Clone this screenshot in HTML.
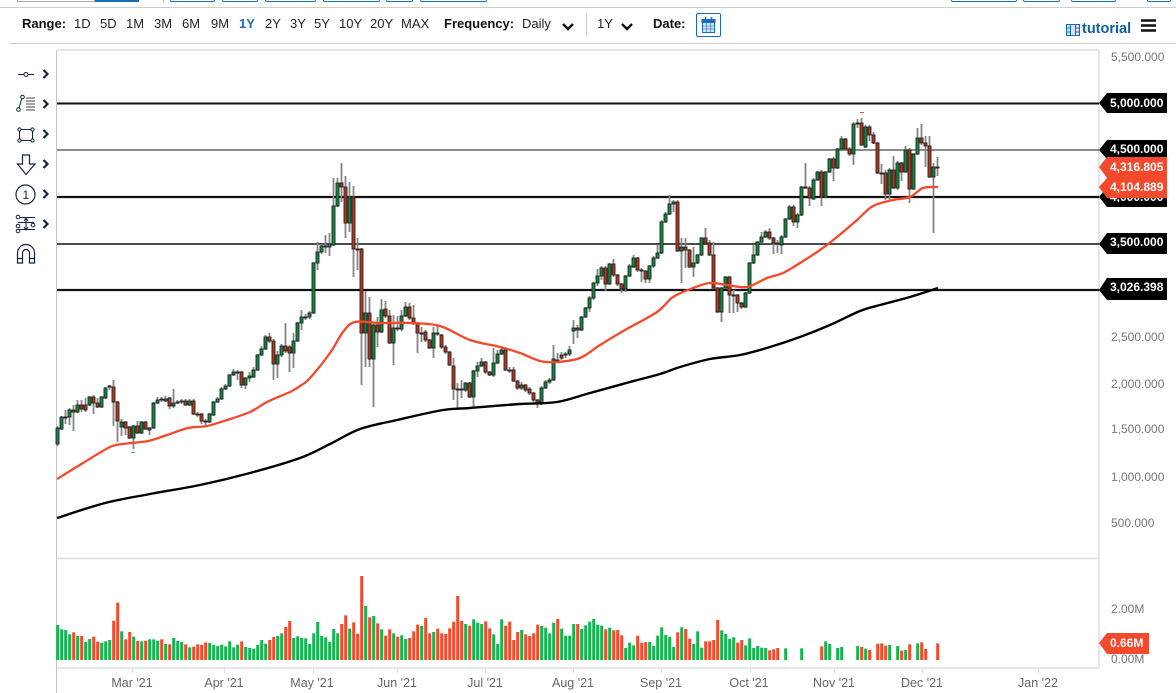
<!DOCTYPE html>
<html><head><meta charset="utf-8"><title>Chart</title>
<style>
html,body{margin:0;padding:0;background:#fff;width:1176px;height:693px;overflow:hidden;font-family:"Liberation Sans",sans-serif}
#r{position:absolute;left:0;top:0;width:1176px;height:693px;overflow:hidden}
.t{position:absolute;white-space:nowrap;font-size:13px;line-height:16px;color:#222}
.b{font-weight:bold;color:#111}
.box{position:absolute;top:-6px;height:8px;border:1px solid #1a6cb5;border-radius:2px;box-sizing:border-box}
.ax{position:absolute;white-space:nowrap;font-size:12px;line-height:14px;color:#777}
.vx{position:absolute;white-space:nowrap;font-size:12.5px;line-height:14px;color:#666;top:676px;transform:translateX(-50%)}
.tl{position:absolute;color:#fff;font-weight:bold;font-size:12px;line-height:14px;left:1110px}
svg{position:absolute;left:0;top:0}
</style></head><body><div id="r">
<div style="position:absolute;left:17px;top:-4px;width:78px;height:6px;border:1px solid #aaa;box-sizing:border-box"></div>
<div style="position:absolute;left:95px;top:0;width:44px;height:2px;background:#1a6cb5"></div>
<div style="position:absolute;left:163px;top:0;width:1px;height:3px;background:#ccc"></div>
<div class="box" style="left:170px;width:45px"></div><div class="box" style="left:222px;width:36px"></div>
<div class="box" style="left:265px;width:51px"></div><div class="box" style="left:323px;width:57px"></div>
<div class="box" style="left:386px;width:27px"></div><div class="box" style="left:420px;width:67px"></div>
<div class="box" style="left:951px;width:66px"></div><div class="box" style="left:1023px;width:37px"></div>
<div class="box" style="left:1071px;width:45px"></div><div class="box" style="left:1147px;width:24px"></div>
<div style="position:absolute;left:0;top:7px;width:1176px;height:1px;background:#ccc"></div>
<div style="position:absolute;left:10px;top:43px;width:1166px;height:1px;background:#ccc"></div>

<div class="t b" style="left:22px;top:16px">Range:</div>
<div class="t" style="left:74px;top:16px">1D</div><div class="t" style="left:100px;top:16px">5D</div>
<div class="t" style="left:126px;top:16px">1M</div><div class="t" style="left:154px;top:16px">3M</div>
<div class="t" style="left:182px;top:16px">6M</div><div class="t" style="left:211px;top:16px">9M</div>
<div class="t b" style="left:239px;top:16px;color:#1a6cb5">1Y</div><div class="t" style="left:265px;top:16px">2Y</div>
<div class="t" style="left:290px;top:16px">3Y</div><div class="t" style="left:314px;top:16px">5Y</div>
<div class="t" style="left:339px;top:16px">10Y</div><div class="t" style="left:370px;top:16px">20Y</div>
<div class="t" style="left:401px;top:16px">MAX</div>
<div class="t b" style="left:444px;top:16px">Frequency:</div><div class="t" style="left:522px;top:16px">Daily</div>
<div style="position:absolute;left:586px;top:13px;width:1px;height:24px;background:#ccc"></div>
<div class="t" style="left:597px;top:16px">1Y</div>
<div class="t b" style="left:653px;top:16px">Date:</div>
<div style="position:absolute;left:696px;top:13px;width:25px;height:24px;border:1px solid #1a6cb5;border-radius:2px;box-sizing:border-box"></div>
<div class="t b" style="left:1082px;top:21px;color:#0f5f9e;font-size:14.5px">tutorial</div>

<svg width="1176" height="693" viewBox="0 0 1176 693" fill="none">
<path d="M563 24l5 5 5-5M622 24l5 5 5-5" stroke="#111" stroke-width="2.4"/>
<g stroke="#1a6cb5"><rect x="702.5" y="19.5" width="12" height="13" fill="#d5e3f1"/><path d="M702 19.5h13v3h-13z" fill="#1a6cb5"/><path d="M705.5 17v4M711.5 17v4" stroke-width="1.5"/><path d="M702.5 26h12M702.5 29h12M706.500 23v9M710.5 23v9" stroke-width=".6"/></g>
<g stroke="#1a6cb5"><rect x="1066.5" y="24.5" width="13" height="11" fill="#d5e3f1"/><path d="M1070.5 24.5v11M1075.5 24.5v11M1066.5 28h4M1066.5 32h4M1075.5 28h4M1075.5 32h4"/></g>
<path d="M1141 20.5h15M1141 25.5h15M1141 30.5h15" stroke="#111" stroke-width="2.4"/>

<path d="M57 50H1099M1099 50V668M57 558.5H1099M57 668H1099" stroke="#ddd" stroke-width="1.5"/>
<path d="M56.5 50V693" stroke="#c4c4c4"/>
<path d="M132.5 668v5M224.5 668v5M313.5 668v5M397.5 668v5M485.5 668v5M573.5 668v5M661.5 668v5M750.5 668v5M834.5 668v5M922.5 668v5M1038.5 668v5" stroke="#ddd"/>

<path d="M57 103.5H1099" stroke="#111" stroke-width="2"/>
<path d="M57 150H1099" stroke="#666" stroke-width="1.5"/>
<path d="M57 197H1099" stroke="#111" stroke-width="2.2"/>
<path d="M57 244H1099" stroke="#111" stroke-width="1.4"/>
<path d="M57 290H1099" stroke="#111" stroke-width="2.2"/>

<g id="vol"></g>
<g id="wick" stroke="#858585" stroke-width="1.8"></g>
<g id="body" stroke="#222" stroke-width="0.9"></g>

<path id="ma1" d="M57 479L83 463L110 447L123 444L148 441L167 435L188 428L207 426L227 420L250 412L267 402L290 392L300 386L310 378L330 353L343 332L355 322L380 323L410 323L440 326L470 340L500 347L520 353L540 361L557 362L580 358L600 345L625 330L657 312L673 297L693 288L710 283L727 285L747 287L767 278L783 273L800 263L820 250L837 237L857 220L873 206L893 200L910 197L923 188L938 187" stroke="#f4492c" stroke-width="2.3" stroke-linejoin="round"/>
<path id="ma2" d="M57 518L105 503L150 494L200 485L250 473L300 458L330 444L360 429L397 420L443 410L470 408L520 404L557 402L590 393L630 382L660 374L680 367L710 359L740 355L770 347L800 337L830 325L860 311L880 305L910 297L938 288" stroke="#000" stroke-width="2.4" stroke-linejoin="round"/>
<path d="M131 452.5h4" stroke="#2fbf71"/><path d="M860 112.5h4" stroke="#f4492c"/>

<g fill="#000"><path d="M1099 103l8-10h60v20h-60z"/><path d="M1099 150l8-10h60v19h-60z"/><path d="M1099 197l8-10h60v20h-60z"/><path d="M1099 244l8-11h60v21h-60z"/><path d="M1099 290l8-12h60v22h-60z"/></g>
<g fill="#f4492c"><path d="M1099 167l8-10h60v21h-60z"/><path d="M1099 187l8-9h60v20h-60z"/><path d="M1099 643l8-10h42v21h-42z"/></g>

<g stroke="#10233f" stroke-width="1" fill="#fff">
<path d="M18 74.5h16"/><circle cx="26" cy="74.5" r="2"/>
<path d="M19 108L22 98"/><circle cx="18.5" cy="109.5" r="1.8"/><circle cx="22.5" cy="97" r="1.8"/>
<path d="M26 98h9M26 101h9M26 104h9M26 107h9M26 110h9" stroke="#444"/>
<rect x="19.5" y="129.5" width="13" height="11"/><circle cx="19.5" cy="129.5" r="1.6"/><circle cx="32.5" cy="129.5" r="1.6"/><circle cx="19.5" cy="140.5" r="1.6"/><circle cx="32.5" cy="140.5" r="1.6"/>
<path d="M22.5 155h7v9h5.500L26 174.5 17.500 164H22.500z" stroke-width="1.2"/>
<circle cx="25.5" cy="194.5" r="9.5" stroke-width="1.2"/>
<path d="M18 217.5h17M18 229.5h17M18 222.5h16" stroke-width="1"/><circle cx="18" cy="217" r="1.8"/><circle cx="33" cy="225" r="1.8"/><circle cx="18" cy="226" r="1.8"/><circle cx="18" cy="231" r="1.8"/>
<path d="M26 218v12M24 221l2-3 2 3M24 227l2 3 2-3" fill="none"/>
<path d="M17.5 263v-10a8.5 8.5 0 0 1 17 0v10h-5v-10a3.5 3.5 0 0 0-7 0v10zM17.5 258.5h5M29.5 258.5h5" stroke-width="1.2"/>
</g>
<path d="M43.5 70l4 4-4 4M43.5 100l4 4-4 4M43.5 130l4 4-4 4M43.5 160l4 4-4 4M43.5 190l4 4-4 4M43.5 220l4 4-4 4" stroke="#10233f" stroke-width="2.2"/>
</svg>
<div class="t" style="left:22.5px;top:187px;font-size:12px;color:#10233f">1</div>

<div class="ax" style="left:1111px;top:50px">5,500.000</div>
<div class="ax" style="left:1111px;top:330px">2,500.000</div>
<div class="ax" style="left:1111px;top:377px">2,000.000</div>
<div class="ax" style="left:1111px;top:422px">1,500.000</div>
<div class="ax" style="left:1111px;top:470px">1,000.000</div>
<div class="ax" style="left:1111px;top:516px">500.000</div>
<div class="ax" style="left:1111px;top:602px">2.00M</div>
<div class="ax" style="left:1111px;top:652px">0.00M</div>
<div class="tl" style="top:96px">5,000.000</div>
<div class="tl" style="top:142px">4,500.000</div>
<div class="tl" style="top:160px">4,316.805</div>
<div class="tl" style="top:180px">4,104.889</div>
<div style="position:absolute;left:1110px;top:198px;width:56px;height:4px;overflow:hidden"><div class="tl" style="left:0;top:-8px">4,000.000</div></div>
<div class="tl" style="top:235px">3,500.000</div>
<div class="tl" style="top:280px">3,026.398</div>
<div class="tl" style="top:636px">0.66M</div>

<div class="vx" style="left:132px">Mar '21</div><div class="vx" style="left:224px">Apr '21</div>
<div class="vx" style="left:312px">May '21</div><div class="vx" style="left:397px">Jun '21</div>
<div class="vx" style="left:485px">Jul '21</div><div class="vx" style="left:573px">Aug '21</div>
<div class="vx" style="left:661px">Sep '21</div><div class="vx" style="left:749px">Oct '21</div>
<div class="vx" style="left:834px">Nov '21</div><div class="vx" style="left:922px">Dec '21</div>
<div class="vx" style="left:1038px">Jan '22</div>
</div>
<script>
var NS="http://www.w3.org/2000/svg";
// colour(0 green,1 red), body top, body bottom, wick top, wick bottom
var C=[[0,428,444,426,446],[0,417,429,416,430],[0,417,418,410,424],[0,410,417,408,425],[1,410,412,405,431],[0,405,412,400,413],[1,405,409,400,412],[1,405,410,398,412],[0,397,405,396,406],[1,397,403,395,414],[1,403,407,398,408],[0,397,407,396,408],[0,388,398,387,399],[0,386,387,385,390],[1,387,402,380,426],[1,402,421,401,442],[0,422,427,419,436],[1,422,428,421,435],[1,427,438,426,439],[0,426,438,425,449],[1,426,433,421,434],[0,422,433,421,434],[1,422,429,421,430],[0,428,430,427,435],[0,403,428,402,429],[0,400,403,397,404],[0,399,400,397,402],[0,399,401,396,402],[1,398,406,397,409],[0,403,406,389,408],[0,402,403,400,404],[0,401,402,399,404],[1,401,405,399,406],[0,401,405,399,406],[1,401,414,399,415],[0,414,415,412,417],[1,414,421,413,424],[0,421,422,419,425],[0,414,422,413,423],[0,402,415,401,416],[0,399,402,397,403],[0,389,399,387,400],[0,386,389,384,390],[0,375,386,374,387],[0,372,375,369,376],[1,372,373,370,380],[1,372,385,371,388],[0,378,385,377,389],[0,376,378,372,382],[0,370,377,367,378],[0,355,370,354,371],[0,349,355,346,356],[0,337,349,335,350],[1,337,341,333,343],[1,341,364,339,380],[0,355,364,351,378],[0,346,355,344,357],[1,346,351,323,353],[1,347,353,345,372],[0,341,353,333,368],[0,323,341,322,342],[0,317,323,310,330],[0,317,318,314,320],[0,313,317,311,319],[0,263,313,262,314],[0,252,263,242,270],[0,246,252,244,254],[0,246,247,235,253],[0,244,247,233,256],[0,206,245,178,246],[0,183,206,178,207],[1,183,187,163,202],[1,187,223,176,238],[0,197,223,182,232],[1,197,249,186,277],[0,249,250,238,270],[1,249,333,248,385],[0,313,333,291,367],[1,313,359,297,367],[0,325,359,324,407],[1,325,332,317,347],[0,310,332,299,333],[1,309,316,301,318],[1,316,343,310,344],[0,328,343,315,365],[0,328,329,316,331],[0,316,329,310,331],[0,307,316,302,317],[1,307,318,303,320],[1,318,323,305,325],[1,323,333,322,353],[0,333,334,327,342],[1,332,340,330,342],[1,340,348,339,349],[0,333,348,327,358],[0,333,334,325,336],[1,335,347,334,349],[1,347,352,345,354],[1,352,365,351,366],[1,366,389,358,400],[0,389,390,383,410],[0,389,390,380,398],[0,383,390,382,392],[1,383,397,382,398],[0,371,397,370,408],[0,366,371,362,377],[0,362,366,358,367],[1,362,372,361,374],[1,372,375,371,376],[0,363,375,348,377],[0,354,363,350,364],[0,350,354,347,355],[1,350,370,348,371],[0,370,371,367,373],[1,370,381,367,382],[1,381,388,380,390],[0,385,388,382,390],[1,385,390,384,392],[1,389,393,387,395],[1,393,400,392,402],[1,400,403,399,408],[0,388,404,386,405],[0,382,388,380,389],[0,380,382,378,384],[0,359,380,345,381],[0,360,361,353,363],[1,355,358,352,360],[0,354,355,352,358],[0,350,354,346,356],[0,328,331,320,344],[1,328,330,325,338],[0,317,330,316,331],[0,308,317,307,318],[0,298,308,296,312],[0,283,298,282,300],[0,276,283,269,286],[0,268,276,266,280],[1,268,284,266,291],[0,264,284,263,285],[1,264,275,259,277],[1,275,284,274,286],[1,284,289,283,293],[0,276,289,275,292],[0,266,276,264,277],[0,258,267,255,268],[1,258,270,257,272],[0,270,271,268,282],[1,271,279,270,283],[0,266,279,265,283],[0,258,266,256,268],[0,253,258,245,259],[0,222,253,220,254],[0,214,222,212,223],[0,204,214,195,215],[0,202,204,200,212],[1,202,251,200,252],[0,247,251,238,283],[1,247,250,238,268],[1,250,267,249,268],[0,263,267,247,277],[0,255,263,254,264],[0,238,255,237,256],[1,238,243,228,244],[1,243,255,240,256],[1,255,288,242,289],[1,288,312,287,313],[0,288,312,287,322],[0,277,288,276,289],[1,277,295,276,313],[0,295,296,290,313],[1,295,303,294,312],[1,303,307,302,309],[0,293,307,292,308],[0,263,293,262,294],[0,255,263,245,264],[0,242,255,241,256],[0,237,242,232,243],[0,232,237,230,238],[1,232,238,228,240],[1,238,243,237,254],[0,243,244,240,253],[0,237,245,235,254],[0,219,237,218,238],[0,207,219,205,220],[1,207,222,205,226],[0,215,222,213,228],[0,187,215,186,216],[1,187,188,163,189],[1,188,198,186,206],[0,180,199,178,200],[0,172,180,171,181],[1,172,197,170,206],[0,172,197,171,198],[0,159,172,158,173],[1,159,168,157,181],[0,149,168,148,169],[0,139,149,136,150],[1,139,149,138,150],[1,149,154,147,156],[0,124,154,122,165],[0,123,124,119,128],[1,123,145,118,146],[0,127,147,125,148],[1,127,135,125,141],[1,135,143,132,144],[1,143,173,142,174],[0,173,174,164,184],[1,173,194,170,200],[0,170,194,168,201],[1,170,188,156,189],[0,163,188,161,190],[1,163,172,162,181],[0,150,172,146,173],[1,150,189,148,203],[0,154,189,153,190],[0,138,154,128,155],[1,138,143,124,145],[1,143,146,136,167],[1,146,177,136,178],[0,167,177,163,233],[0,167,168,157,176]];
var V=[[0,165],[0,178],[0,180],[0,193],[1,187],[0,198],[1,198],[0,216],[0,207],[1,200],[1,215],[0,218],[0,214],[0,210],[1,152],[1,98],[0,184],[1,208],[1,186],[0,200],[1,213],[0,214],[1,212],[0,208],[0,208],[0,212],[1,208],[0,222],[1,223],[0,204],[0,213],[0,216],[1,223],[0,232],[1,230],[1,223],[1,225],[1,217],[0,219],[0,225],[0,228],[0,224],[0,229],[0,214],[0,232],[0,224],[1,214],[0,231],[0,234],[0,236],[0,225],[0,210],[0,221],[1,210],[1,201],[0,198],[0,190],[1,171],[1,153],[0,204],[0,199],[0,204],[0,205],[0,222],[0,190],[0,156],[0,198],[0,202],[0,216],[0,177],[0,190],[1,162],[1,136],[0,176],[1,157],[1,191],[1,18],[0,108],[1,142],[0,138],[1,160],[0,178],[1,197],[1,178],[0,190],[1,200],[0,196],[0,207],[1,204],[1,184],[1,164],[0,168],[1,144],[1,190],[0,186],[1,176],[1,190],[1,192],[1,175],[1,155],[1,78],[1,153],[0,162],[1,167],[0,148],[0,158],[0,162],[1,154],[1,175],[0,193],[0,222],[0,148],[1,167],[1,155],[1,210],[1,186],[0,180],[1,193],[1,198],[1,190],[1,164],[0,168],[0,173],[0,190],[0,158],[1,147],[0,176],[0,197],[0,197],[0,162],[1,162],[0,177],[0,166],[0,155],[0,147],[0,164],[0,167],[1,178],[0,173],[1,181],[1,180],[1,196],[0,234],[0,218],[0,226],[1,197],[1,218],[1,216],[0,216],[0,228],[0,197],[0,172],[0,195],[0,201],[0,231],[1,187],[0,172],[1,177],[1,206],[0,222],[0,184],[0,233],[1,214],[1,214],[1,210],[1,150],[0,181],[0,192],[0,207],[0,202],[1,218],[1,210],[0,226],[0,205],[0,234],[0,228],[0,233],[0,234],[1,241],[1,238],[1,234],0,[0,235],0,0,0,[0,235],0,0,0,0,[1,229],[0,214],[0,222],0,[0,234],[0,231],0,0,0,[0,228],[1,231],[0,236],[1,240],0,[1,221],[1,220],[1,227],[0,225],0,[0,228],[1,242],[0,240],[1,223],0,[0,220],[1,217],[1,237],0,0,[1,220]];
function el(n,a,p){var e=document.createElementNS(NS,n);for(var k in a)e.setAttribute(k,a[k]);p.appendChild(e)}
var gw=document.getElementById('wick'),gb=document.getElementById('body'),gv=document.getElementById('vol');
C.forEach(function(c,i){var x=57+4*i+0.5;
 el('path',{d:'M'+x+' '+c[3]+'V'+c[4]},gw);
 el('rect',{x:x-1.5,y:c[1],width:3,height:Math.max(c[2]-c[1],0.5),fill:c[0]?'#b5351f':'#0f8a41'},gb);});
V.forEach(function(v,i){if(!v)return;var top=570+v[1]/3;
 el('rect',{x:57+4*i-0.8,y:top,width:3,height:660-top,fill:v[0]?'#f4492c':'#14b450'},gv);});
function smooth(id){var e=document.getElementById(id),p=e.getAttribute('d').slice(1).split('L').map(function(s){return s.split(' ').map(Number)}),d='M'+p[0].join(' ');
 for(var i=0;i<p.length-1;i++){var a=p[i-1]||p[i],b=p[i],c=p[i+1],f=p[i+2]||c;
  d+='C'+(b[0]+(c[0]-a[0])/6)+' '+(b[1]+(c[1]-a[1])/6)+' '+(c[0]-(f[0]-b[0])/6)+' '+(c[1]-(f[1]-b[1])/6)+' '+c[0]+' '+c[1];}
 e.setAttribute('d',d);}
smooth('ma1');smooth('ma2');
</script>
</body></html>
